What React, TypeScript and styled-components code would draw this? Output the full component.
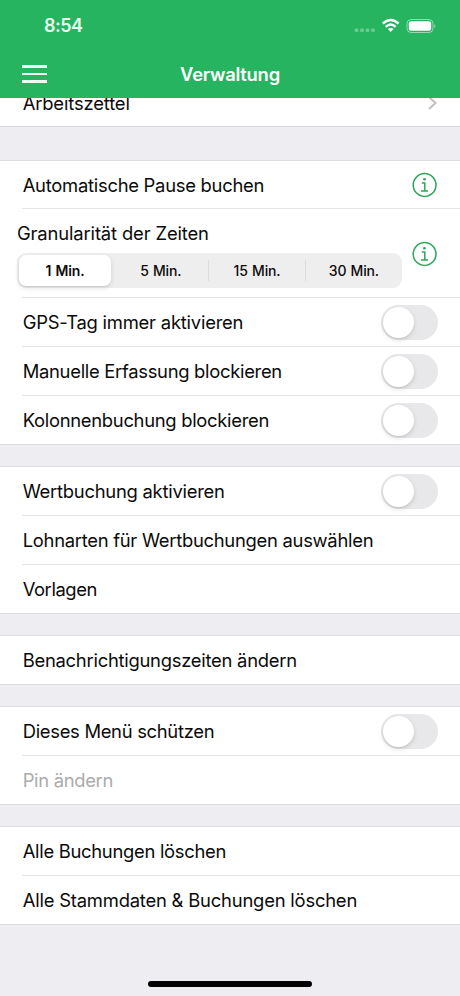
import React from "react";
import styled, { createGlobalStyle } from "styled-components";

const GlobalStyle = createGlobalStyle`
  *, *::before, *::after { box-sizing: border-box; }
  body { margin: 0; background: #efeff3; }
`;

const Screen = styled.div`
  display: flex;
  flex-direction: column;
  width: 460px;
  height: 996px;
  overflow: hidden;
  background: #eeeef2;
  color: #0b0b0b;
  font-family: Inter, "Liberation Sans", sans-serif;
`;

const Header = styled.header`
  flex: none;
  height: 98px;
  background: #27b460;
  color: #fff;
`;

const StatusBar = styled.div`
  display: flex;
  align-items: center;
  justify-content: space-between;
  height: 50px;
  padding: 1px 23px 0 44px;
`;

const Clock = styled.span`
  font-size: 18px;
  line-height: 22px;
  font-weight: 600;
  letter-spacing: -0.55px;
  color: #eafff1;
`;

const StatusIcons = styled.svg`
  display: block;
  width: 84px;
  height: 18px;
`;

const NavBar = styled.div`
  display: grid;
  grid-template-columns: 80px 1fr 80px;
  align-items: center;
  height: 48px;
`;

const MenuButton = styled.button`
  display: flex;
  flex-direction: column;
  gap: 5px;
  width: 25px;
  margin: 0 0 0 22px;
  padding: 0;
  border: 0;
  background: none;
`;

const MenuLine = styled.span`
  height: 2.5px;
  background: #eafff1;
`;

const Title = styled.h1`
  margin: 0;
  padding-bottom: 1px;
  text-align: center;
  font-size: 18.4px;
  line-height: 24px;
  font-weight: 600;
  letter-spacing: -0.24px;
`;

const Group = styled.section<{ $gap?: number }>`
  flex: none;
  margin-top: ${(p) => p.$gap ?? 21}px;
  border-top: 1px solid #dfdfe2;
  border-bottom: 1px solid #dcdce0;
  background: #fff;
`;

const ScrolledGroup = styled(Group)`
  display: flex;
  align-items: flex-end;
  height: 29px;
  margin-top: 0;
  border-top: 0;
  overflow: hidden;
`;

const Row = styled.div<{ $height?: number }>`
  display: flex;
  align-items: center;
  justify-content: space-between;
  height: ${(p) => p.$height ?? 49}px;
  margin-left: 22px;
  padding: 0 22px 0 0.7px;
  border-bottom: 1px solid #e5e5e7;

  &:last-child {
    height: 48px;
    border-bottom: 0;
  }
`;

const ScrolledRow = styled(Row)`
  flex: 1;
  padding-top: 1px;
`;

const TallRow = styled(Row)`
  padding-top: 2px;
`;

const Label = styled.span<{ $tracking: number; $muted?: boolean }>`
  font-size: 18.4px;
  line-height: 24px;
  white-space: nowrap;
  letter-spacing: ${(p) => p.$tracking}px;
  color: ${(p) => (p.$muted ? "#ababab" : "inherit")};
`;

const Switch = styled.button`
  display: flex;
  align-items: center;
  width: 57px;
  height: 35px;
  padding: 0 2px;
  border: 0;
  border-radius: 18px;
  background: #e8e8ea;
`;

const Thumb = styled.span`
  width: 31px;
  height: 31px;
  border-radius: 50%;
  background: #fff;
  box-shadow: 0 2px 5px rgba(0, 0, 0, 0.13), 0 1px 1px rgba(0, 0, 0, 0.06);
`;

const Granularity = styled.div`
  display: flex;
  flex-direction: column;
  gap: 8px;
  width: 385px;
  margin-left: -5.7px;
`;

const SegmentedControl = styled.div`
  display: grid;
  grid-template-columns: 94px 1fr 1fr 1fr;
  align-items: center;
  height: 35px;
  padding: 2px 0 2px 2px;
  border-radius: 9px;
  background: #eeeeef;
`;

const Segment = styled.button<{ $selected?: boolean; $divided?: boolean; $tracking: number }>`
  height: ${(p) => (p.$selected ? 31 : 21)}px;
  margin: 0 ${(p) => (p.$selected ? 2 : 0)}px 0 0;
  padding: 1px 0 0;
  border: 0;
  border-right: ${(p) => (p.$divided ? "1px solid #dcdcde" : "0")};
  border-radius: ${(p) => (p.$selected ? 7 : 0)}px;
  background: ${(p) => (p.$selected ? "#fff" : "none")};
  box-shadow: ${(p) => (p.$selected ? "0 2px 5px rgba(0,0,0,.12), 0 1px 1px rgba(0,0,0,.06)" : "none")};
  color: #0b0b0b;
  font: ${(p) => (p.$selected ? 600 : 500)} 14px/20px Inter, "Liberation Sans", sans-serif;
  letter-spacing: ${(p) => p.$tracking}px;
  word-spacing: 0.8px;
`;

const InfoSvg = styled.svg`
  display: block;
  width: 26px;
  height: 26px;
  fill: none;
  stroke: #2aa757;
  stroke-width: 1.5;
`;

const ChevronSvg = styled.svg`
  display: block;
  width: 10px;
  height: 16px;
  fill: none;
  stroke: #c0c0c3;
  stroke-width: 2;
`;

const HomeArea = styled.footer`
  display: flex;
  justify-content: center;
  align-items: flex-end;
  flex: 1;
  padding-bottom: 9px;
`;

const HomeIndicator = styled.div`
  width: 164px;
  height: 6px;
  border-radius: 3px;
  background: #000;
`;

const InfoIcon = () => (
  <InfoSvg viewBox="0 0 26 26">
    <circle cx="12.6" cy="13" r="11.4" />
    <path d="M9.8 11h3v7.8M9.1 18.9h7" />
    <circle cx="12.5" cy="7.3" r="1.3" fill="#2aa757" stroke="none" />
  </InfoSvg>
);

const Toggle = () => (
  <Switch role="switch" aria-checked="false">
    <Thumb />
  </Switch>
);

export default function App() {
  return (
    <Screen>
      <GlobalStyle />
      <Header>
        <StatusBar>
          <Clock>8:54</Clock>
          <StatusIcons viewBox="0 0 84 18">
            <g fill="#fff" opacity="0.3">
              <circle cx="3.5" cy="13.2" r="2" />
              <circle cx="9" cy="13.2" r="2" />
              <circle cx="14.5" cy="13.2" r="2" />
              <circle cx="20" cy="13.2" r="2" />
            </g>
            <g fill="none" stroke="#fff" strokeWidth="2.5">
              <path d="M29.8 6.5Q37.7 -.6 45.6 6.5" />
              <path d="M32.8 9.8Q37.7 5.2 42.6 9.8" />
            </g>
            <path d="M34.9 12Q37.7 9.8 40.5 12L37.7 15Z" fill="#fff" />
            <rect x="54" y="2.5" width="26" height="13" rx="4" fill="none" stroke="#fff" strokeOpacity="0.5" />
            <rect x="55.8" y="4.3" width="22.4" height="9.4" rx="2.3" fill="#fff" />
            <path d="M81.3 6.9Q83.5 9 81.3 11.1Z" fill="#fff" opacity="0.5" />
          </StatusIcons>
        </StatusBar>
        <NavBar>
          <MenuButton aria-label="Menü">
            <MenuLine />
            <MenuLine />
            <MenuLine />
          </MenuButton>
          <Title>Verwaltung</Title>
        </NavBar>
      </Header>

      <ScrolledGroup>
        <ScrolledRow>
          <Label $tracking={-0.16}>Arbeitszettel</Label>
          <ChevronSvg viewBox="0 0 10 16">
            <path d="M1 2L7.5 8L1 14" />
          </ChevronSvg>
        </ScrolledRow>
      </ScrolledGroup>

      <Group $gap={33}>
        <Row $height={48}>
          <Label $tracking={-0.26}>Automatische Pause buchen</Label>
          <InfoIcon />
        </Row>
        <TallRow $height={89}>
          <Granularity>
            <Label $tracking={-0.14}>Granularität der Zeiten</Label>
            <SegmentedControl>
              <Segment $selected $tracking={-0.15}>1 Min.</Segment>
              <Segment $divided $tracking={-0.18}>5 Min.</Segment>
              <Segment $divided $tracking={-0.15}>15 Min.</Segment>
              <Segment $tracking={-0.2}>30 Min.</Segment>
            </SegmentedControl>
          </Granularity>
          <InfoIcon />
        </TallRow>
        <Row>
          <Label $tracking={-0.22}>GPS-Tag immer aktivieren</Label>
          <Toggle />
        </Row>
        <Row>
          <Label $tracking={-0.29}>Manuelle Erfassung blockieren</Label>
          <Toggle />
        </Row>
        <Row>
          <Label $tracking={-0.29}>Kolonnenbuchung blockieren</Label>
          <Toggle />
        </Row>
      </Group>

      <Group>
        <Row>
          <Label $tracking={-0.25}>Wertbuchung aktivieren</Label>
          <Toggle />
        </Row>
        <Row>
          <Label $tracking={-0.275}>Lohnarten für Wertbuchungen auswählen</Label>
        </Row>
        <Row>
          <Label $tracking={-0.43}>Vorlagen</Label>
        </Row>
      </Group>

      <Group>
        <Row>
          <Label $tracking={-0.255}>Benachrichtigungszeiten ändern</Label>
        </Row>
      </Group>

      <Group>
        <Row>
          <Label $tracking={-0.295}>Dieses Menü schützen</Label>
          <Toggle />
        </Row>
        <Row>
          <Label $tracking={-0.32} $muted>Pin ändern</Label>
        </Row>
      </Group>

      <Group>
        <Row>
          <Label $tracking={-0.29}>Alle Buchungen löschen</Label>
        </Row>
        <Row>
          <Label $tracking={-0.2}>Alle Stammdaten &amp; Buchungen löschen</Label>
        </Row>
      </Group>

      <HomeArea>
        <HomeIndicator />
      </HomeArea>
    </Screen>
  );
}
